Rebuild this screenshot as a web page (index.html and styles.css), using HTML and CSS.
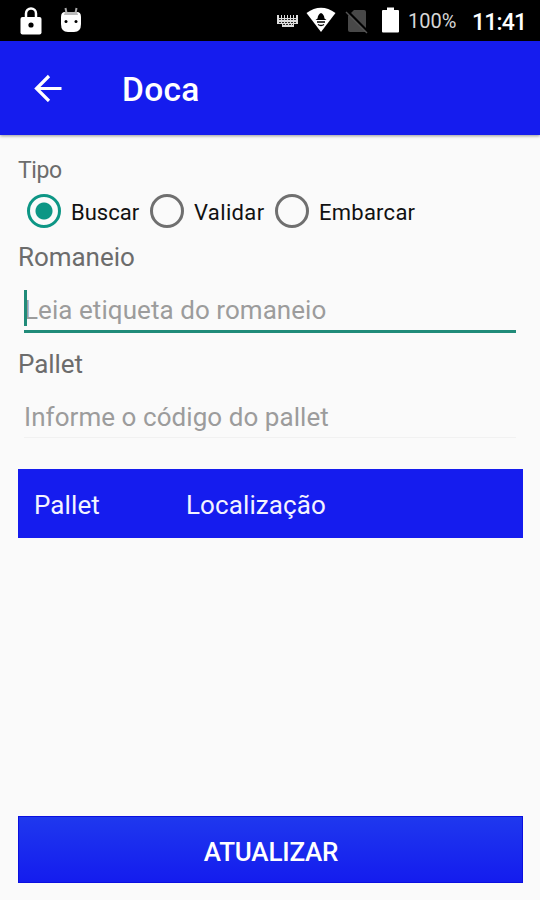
FILE: index.html
```html
<!doctype html>
<html lang="pt-br">
  <head>
    <meta charset="utf-8">
    <meta name="viewport" content="width=device-width, initial-scale=1">
    <title>Doca</title>
    <link rel="stylesheet" href="styles.css">
  </head>
  <body>
    <div class="statusbar">
      <svg class="icon-lock" width="22" height="28" viewBox="0 0 22 28">
        <path d="M6 11V6.500a5 5 0 0 1 10 0V11" fill="none" stroke="#fff" stroke-width="2.500"/>
        <rect x="0.500" y="10" width="21" height="17.500" rx="2" fill="#fff"/>
        <circle cx="11" cy="18" r="2.600" fill="#000"/>
      </svg>
      <svg class="icon-droid" width="22" height="26" viewBox="0 0 22 26">
        <path d="M5.500 1l1 5M16.500 1l-1 5" stroke="#aaa" stroke-width="2"/>
        <path d="M5 5h12q4 0 4 5v7q0 8-7 8H8q-7 0-7-8v-7q0-5 4-5z" fill="#fff"/>
        <path d="M5 5h12l1 3H4z" fill="#bbb"/>
        <circle cx="6" cy="14.500" r="1.500" fill="#000"/>
        <circle cx="16" cy="14.500" r="1.500" fill="#000"/>
      </svg>
      <svg class="icon-keyboard" width="22" height="14" viewBox="0 0 22 14">
        <path d="M0 1h2v3h2V1h1v3h2V1h1v3h2V1h1v3h2V1h1v3h2V1h1v3h2V1h2v9h-4v3H5v-3H0z" fill="#ddd"/>
        <path d="M2 5.500h18M2 8.500h18M6 10.500h10" stroke="#000" stroke-width="0.800" stroke-dasharray="2 1"/>
      </svg>
      <svg class="icon-wifi" width="30" height="26" viewBox="0 0 30 26">
        <path d="M0.500 6Q15-4.500 29.500 6L15 25z" fill="#fff"/>
        <path d="M15 6q3 1 3.500 5.500l2 1.500h-11l2-1.500Q12 7 15 6z" fill="#000"/>
        <path d="M11 15h8M12 17.500q3 2 6 0" fill="none" stroke="#000" stroke-width="1.300"/>
      </svg>
      <svg class="icon-sim" width="24" height="26" viewBox="0 0 24 26">
        <path d="M9 2h10q2 0 2 2v19q0 1-1 1H5q-2 0-2-2V8z" fill="#484848"/>
        <path d="M2 3l21 21" stroke="#000" stroke-width="3"/>
        <path d="M1 4l21 21" stroke="#555" stroke-width="1.500"/>
      </svg>
      <svg class="icon-battery" width="17" height="26" viewBox="0 0 17 26">
        <path d="M1 3h4V0.500h7V3h4q1 0 1 1v20.500q0 1-1 1H1q-1 0-1-1V4q0-1 1-1z" fill="#fff"/>
      </svg>
      <span class="percent">100%</span>
      <span class="clock">11:41</span>
    </div>

    <div class="appbar">
      <svg width="28" height="28" viewBox="0 0 28 28">
        <path d="M27.500 14.500H2.500M15 2L2.500 14.500 15 27" fill="none" stroke="#fff" stroke-width="3.200"/>
      </svg>
      <h1>Doca</h1>
    </div>

    <div class="content">
      <div class="label tipo">Tipo</div>
      <div class="radios">
        <label class="radio"><input type="radio" name="tipo" checked><span class="buscar">Buscar</span></label>
        <label class="radio"><input type="radio" name="tipo"><span class="validar">Validar</span></label>
        <label class="radio"><input type="radio" name="tipo"><span class="embarcar">Embarcar</span></label>
      </div>

      <div class="label">Romaneio</div>
      <div class="field active">
        <input type="text" placeholder="Leia etiqueta do romaneio">
      </div>

      <div class="label">Pallet</div>
      <div class="field">
        <input type="text" placeholder="Informe o código do pallet">
      </div>

      <div class="table-head">
        <span>Pallet</span>
        <span>Localização</span>
      </div>

      <button class="update">ATUALIZAR</button>
    </div>
  </body>
</html>
```
FILE: styles.css
```css
* {
  box-sizing: border-box;
}

html, body {
  height: 100%;
}

body {
  display: flex;
  flex-direction: column;
  margin: 0;
  font-family: Roboto, sans-serif;
  background-color: #fafafa;
}

.statusbar {
  display: flex;
  align-items: center;
  flex: none;
  height: 41px;
  padding: 0 14px 0 20px;
  color: #fff;
  background-color: #000;
}

.icon-droid {
  margin: 0 auto 2px 18px;
}

.icon-wifi {
  margin: 0 9px 1px 7px;
}

.icon-battery {
  margin: 0 9px 1px 13px;
}

.percent {
  width: 64px;
  padding-top: 1px;
  font-size: 20px;
  color: #d6d6d6;
}

.clock {
  width: 54px;
  padding-top: 3px;
  font-size: 23px;
  font-weight: 500;
  letter-spacing: -0.8px;
  white-space: nowrap;
}

.appbar {
  display: flex;
  align-items: center;
  flex: none;
  height: 94px;
  padding-left: 34px;
  color: #fff;
  background-color: #151cee;
  box-shadow: 0 1px 3px rgba(0, 0, 0, 0.4);
}

.appbar h1 {
  margin: 3px 0 0 60px;
  font-size: 33.5px;
  font-weight: 500;
  letter-spacing: 0.3px;
}

.content {
  display: flex;
  flex-direction: column;
  flex: 1;
  padding: 19px 17px 17px 18px;
}

.label {
  height: 34px;
  font-size: 26px;
  line-height: 34px;
  letter-spacing: -0.05px;
  color: #6c6c6c;
}

.tipo {
  height: 32px;
  font-size: 23px;
  line-height: 33px;
  letter-spacing: -0.4px;
}

.radios {
  display: flex;
  height: 54px;
  padding-left: 9px;
}

.radio {
  display: flex;
  align-items: center;
  height: 50px;
  font-size: 22px;
  color: #111;
}

.radio input {
  flex: none;
  width: 34px;
  height: 34px;
  margin: 0 10px 0 0;
  border: 3px solid #6f6f6f;
  border-radius: 50%;
  appearance: none;
}

.radio input:checked {
  border-color: #0d9685;
  background: radial-gradient(circle, #0d9685 8px, transparent 9px);
}

.radio span {
  padding-top: 2px;
}

.buscar {
  width: 79px;
}

.validar {
  width: 81px;
  letter-spacing: 0.35px;
}

.embarcar {
  letter-spacing: 0.25px;
}

.field {
  position: relative;
  height: 73px;
  padding: 12px 7px 0 6px;
}

.field input {
  display: block;
  width: 100%;
  height: 45px;
  padding: 4px 0 0;
  font: 26px Roboto, sans-serif;
  letter-spacing: 0.06px;
  border: 0;
  border-bottom: 1px solid #f1f1f1;
  border-radius: 0;
  outline: 0;
  background: none;
}

.field input::placeholder {
  color: #9c9c9c;
  opacity: 1;
}

.active input {
  height: 47px;
  border-bottom: 3px solid #208b79;
}

/* text cursor */
.active::before {
  content: "";
  position: absolute;
  top: 16px;
  left: 6px;
  width: 3px;
  height: 36px;
  background-color: #208b79;
}

.table-head {
  display: flex;
  align-items: center;
  height: 69px;
  margin-top: 15px;
  padding: 2px 16px 0;
  font-size: 26px;
  letter-spacing: 0.1px;
  color: #f3f3ff;
  background-color: #151cee;
}

.table-head span:first-child {
  width: 152px;
}

.update {
  height: 67px;
  margin-top: auto;
  padding: 4px 0 0 1px;
  font: 500 26px Roboto, sans-serif;
  letter-spacing: -0.2px;
  color: #fff;
  border: 1px solid #0b0fe0;
  background: linear-gradient(#1f38ee, #141cee);
}
```
